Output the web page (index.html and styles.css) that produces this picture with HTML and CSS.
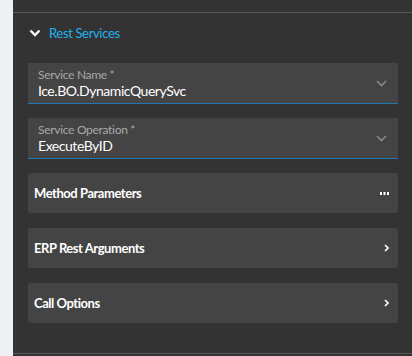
FILE: index.html
```html
<!DOCTYPE html>
<html lang="en">

<head>
  <meta charset="UTF-8" />
  <meta name="viewport" content="width=device-width, initial-scale=1.0">
  <title>Rest Services</title>
  <link rel="stylesheet" href="styles.css">
</head>

<body>
  <div class="rail"></div>
  <div class="panel">
    <div class="panel-top"></div>

    <div class="section">
      <div class="section-head">
        <svg class="chev-down" width="12" height="8" viewBox="0 0 12 8">
          <path d="M1.5 1.5 L6 6 L10.5 1.5" fill="none" stroke="#ffffff" stroke-width="2.4" />
        </svg>
        <span>Rest Services</span>
      </div>

      <div class="section-body">
        <div class="field">
          <div class="field-text">
            <label>Service Name *</label>
            <div class="value">Ice.BO.DynamicQuerySvc</div>
          </div>
          <svg class="field-arrow" width="11" height="7" viewBox="0 0 11 7">
            <path d="M1 1 L5.5 5.5 L10 1" fill="none" stroke="#8a8a8a" stroke-width="1.6" />
          </svg>
        </div>

        <div class="field">
          <div class="field-text">
            <label>Service Operation *</label>
            <div class="value">ExecuteByID</div>
          </div>
          <svg class="field-arrow" width="11" height="7" viewBox="0 0 11 7">
            <path d="M1 1 L5.5 5.5 L10 1" fill="none" stroke="#8a8a8a" stroke-width="1.6" />
          </svg>
        </div>

        <div class="card">
          <span>Method Parameters</span>
          <svg width="9" height="3" viewBox="0 0 9 3">
            <rect x="0" y="0" width="2" height="3" fill="#fff" />
            <rect x="3.5" y="0" width="2" height="3" fill="#fff" />
            <rect x="7" y="0" width="2" height="3" fill="#fff" />
          </svg>
        </div>

        <div class="card">
          <span>ERP Rest Arguments</span>
          <svg width="5" height="8" viewBox="0 0 5 8">
            <path d="M1 1 L4 4 L1 7" fill="none" stroke="#fff" stroke-width="1.6" />
          </svg>
        </div>

        <div class="card">
          <span>Call Options</span>
          <svg width="5" height="8" viewBox="0 0 5 8">
            <path d="M1 1 L4 4 L1 7" fill="none" stroke="#fff" stroke-width="1.6" />
          </svg>
        </div>
      </div>
    </div>

    <div class="panel-bottom"></div>
  </div>
</body>

</html>
```

FILE: styles.css
```css
* {
  box-sizing: border-box;
  margin: 0;
  padding: 0;
}

body {
  display: flex;
  height: 356px;
  overflow: hidden;
  background: #eef1f4;
  font-family: 'Lato', 'Open Sans', sans-serif;
}

.rail {
  width: 13px;
  flex-shrink: 0;
  background: #eef1f4;
}

.panel {
  flex: 1;
  background: #333333;
  display: flex;
  flex-direction: column;
}

.panel-top {
  height: 13px;
  border-bottom: 1px solid #575757;
}

/* Section */
.section {
  padding: 0 14px 0 15px;
  height: 340px;
}

.section-head {
  display: flex;
  align-items: center;
  gap: 8px;
  height: 40px;
  padding-left: 1px;
  color: #1fb2ee;
  font-size: 13px;
  letter-spacing: -0.35px;
}

.section-body {
  display: flex;
  flex-direction: column;
  gap: 14px;
  padding-top: 10px;
}

/* Dropdown fields */
.field {
  height: 41px;
  background: #444444;
  border-bottom: 1px solid #1e78b4;
  display: flex;
  align-items: center;
  justify-content: space-between;
  padding: 0 11px 0 10px;
}

.field-text {
  display: flex;
  flex-direction: column;
  padding-top: 1px;
}

.field label {
  color: #a8a8a8;
  font-size: 12px;
  line-height: 14px;
  letter-spacing: -0.3px;
}

.field .value {
  color: #ffffff;
  font-size: 14px;
  line-height: 17px;
  letter-spacing: -0.45px;
}

/* Expander cards */
.card {
  height: 40px;
  background: #444444;
  border-radius: 3px;
  display: flex;
  align-items: center;
  justify-content: space-between;
  padding: 0 9px 0 6px;
  color: #ffffff;
  font-size: 13px;
  font-weight: 700;
  letter-spacing: -0.45px;
}

.card + .card {
  margin-top: 1px;
}

.panel-bottom {
  border-top: 1px solid #575757;
}
```
